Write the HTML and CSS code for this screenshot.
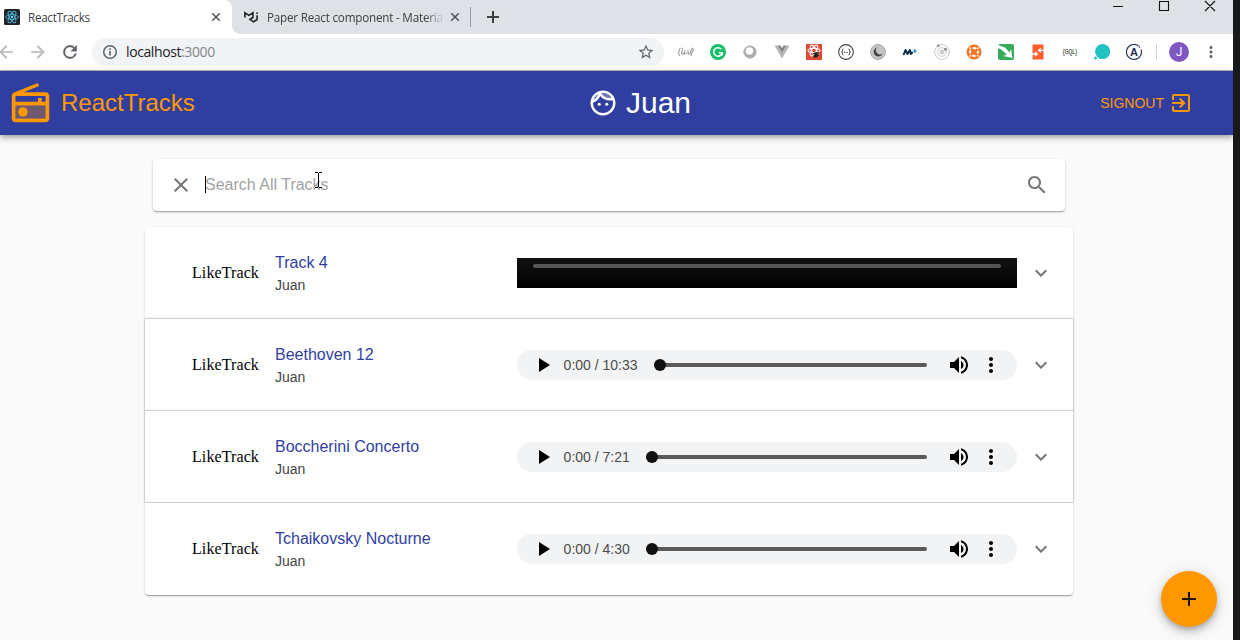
FILE: index.html
```html
<!DOCTYPE html>
<html lang="en">
<head>
<meta charset="utf-8">
<title>ReactTracks</title>
<link rel="stylesheet" href="styles.css">
</head>
<body>
<svg class="defs" width="0" height="0">
  <symbol id="x" viewBox="0 0 24 24"><path d="M19 6.41L17.59 5 12 10.59 6.41 5 5 6.41 10.59 12 5 17.59 6.41 19 12 13.41 17.59 19 19 17.59 13.41 12z"/></symbol>
  <symbol id="volume" viewBox="0 0 24 24"><path d="M3 9v6h4l5 5V4L7 9H3zm13.5 3c0-1.77-1.02-3.29-2.5-4.03v8.05c1.48-.73 2.5-2.25 2.5-4.02zM14 3.23v2.06c2.89.86 5 3.54 5 6.71s-2.11 5.85-5 6.71v2.06c4.01-.91 7-4.49 7-8.77s-2.99-7.86-7-8.77z"/></symbol>
  <symbol id="kebab" viewBox="0 0 24 24"><path d="M12 8c1.1 0 2-.9 2-2s-.9-2-2-2-2 .9-2 2 .9 2 2 2zm0 2c-1.1 0-2 .9-2 2s.9 2 2 2 2-.9 2-2-.9-2-2-2zm0 6c-1.1 0-2 .9-2 2s.9 2 2 2 2-.9 2-2-.9-2-2-2z"/></symbol>
  <symbol id="play" viewBox="0 0 24 24"><path d="M8 5v14l11-7z"/></symbol>
  <symbol id="chevron" viewBox="0 0 24 24"><path d="M16.59 8.59L12 13.17 7.41 8.59 6 10l6 6 6-6z"/></symbol>
</svg>
<div class="window">
  <div class="tabstrip">
    <div class="tab tab-active">
      <svg class="favicon" viewBox="0 0 16 16"><rect width="16" height="16" rx="1.5" fill="#20232a"/><g fill="none" stroke="#4fb8d3" stroke-width=".9"><ellipse cx="8" cy="8" rx="6.4" ry="2.5"/><ellipse cx="8" cy="8" rx="6.4" ry="2.5" transform="rotate(60 8 8)"/><ellipse cx="8" cy="8" rx="6.4" ry="2.5" transform="rotate(120 8 8)"/></g><circle cx="8" cy="8" r="1.3" fill="#61dafb"/></svg>
      <span class="tab-title title-one">ReactTracks</span>
      <svg class="tab-close"><use href="#x"/></svg>
    </div>
    <div class="tab tab-idle">
      <svg class="favicon" viewBox="0 0 16 16" fill="none" stroke="#202124" stroke-width="1.6"><path d="M.9 8.600V3.800l4 2.600 4-2.600v4.700L6 10.300l3.500 2.500 3.600-2.300V6.300M13.100 5V3.400"/></svg>
      <span class="tab-title title-two">Paper React component - Materia</span>
      <svg class="tab-close"><use href="#x"/></svg>
    </div>
    <svg class="newtab" viewBox="0 0 14 14"><path d="M7 1v12M1 7h12" stroke="#3c4043" stroke-width="2"/></svg>
    <svg class="winbtns" viewBox="0 0 110 14" fill="none" stroke="#111"><path d="M3 6.500h10M49.500 1.500h9v9h-9zM95 1l10 10M105 1L95 11" stroke-width="1.100"/></svg>
  </div>
  <div class="toolbar">
    <div class="nav">
      <svg viewBox="0 0 24 24" fill="#babcbe" stroke="#babcbe" stroke-width=".4"><path d="M20 11H7.830l5.590-5.590L12 4l-8 8 8 8 1.410-1.410L7.830 13H20z"/></svg>
      <svg viewBox="0 0 24 24" fill="#babcbe" stroke="#babcbe" stroke-width=".4"><path d="M12 4l-1.410 1.410L16.170 11H4v2h12.170l-5.580 5.590L12 20l8-8z"/></svg>
      <svg viewBox="0 0 24 24" fill="#5f6368" stroke="#5f6368" stroke-width=".5"><path d="M17.650 6.350A7.960 7.960 0 0 0 12 4a8 8 0 1 0 7.730 10h-2.080A6 6 0 1 1 12 6c1.660 0 3.140.69 4.220 1.780L13 11h7V4z"/></svg>
    </div>
    <div class="omnibox">
      <svg class="info" viewBox="0 0 16 16"><circle cx="8" cy="8" r="6.300" fill="none" stroke="#5f6368" stroke-width="1.500"/><path d="M7.200 7h1.600v4.500H7.200zM7.200 4.300h1.600v1.600H7.200z" fill="#5f6368"/></svg>
      <span class="url">localhost<span class="port">:3000</span></span>
      <svg class="star" viewBox="0 0 24 24"><path d="M22 9.240l-7.190-.62L12 2 9.190 8.630 2 9.240l5.460 4.730L5.820 21 12 17.270 18.180 21l-1.630-7.030L22 9.240zM12 15.400l-3.760 2.270 1-4.280-3.320-2.880 4.380-.38L12 6.100l1.710 4.040 4.380.38-3.320 2.880 1 4.280L12 15.400z"/></svg>
    </div>
    <div class="extensions">
      <svg viewBox="0 0 16 16" fill="none" stroke="#999" stroke-width="1.100"><path d="M2.500 4Q-.5 8 1.500 12M13.500 4Q16.500 5 14.500 8T13.500 12M4.500 5.500l-1 4q1 1.500 2.500 0L7 6.500M8 9.500h1M10 6v3.500q1 1 2.500-.5L13.500 5M6.800 6.500v4M4.500 5v-1.200"/></svg>
      <svg viewBox="0 0 16 16"><circle cx="8" cy="8" r="8" fill="#15c26b"/><path d="M11.300 5.200A4.300 4.300 0 1 0 12.200 8.800H8.800M12.200 8.500v3" fill="none" stroke="#fff" stroke-width="1.500"/></svg>
      <svg viewBox="0 0 16 16"><circle cx="8" cy="8" r="6.500" fill="#aaa"/><circle cx="7.500" cy="7" r="3.800" fill="#fff"/><circle cx="8" cy="8" r="6" fill="none" stroke="#bbb" stroke-width="1"/></svg>
      <svg viewBox="0 0 16 16"><path d="M.5 1.500h3.200L8 9l4.300-7.500h3.200L8 14.500z" fill="#b4b4b4"/><path d="M3.700 1.500h2.700L8 4.300l1.600-2.800h2.700L8 9z" fill="#858585"/></svg>
      <svg viewBox="0 0 16 16"><rect width="16" height="16" fill="#dc4a38"/><g fill="none" stroke="#fff" stroke-width="1.100"><ellipse cx="8" cy="6.500" rx="6" ry="2.300"/><ellipse cx="8" cy="6.500" rx="6" ry="2.300" transform="rotate(60 8 6.500)"/><ellipse cx="8" cy="6.500" rx="6" ry="2.300" transform="rotate(120 8 6.500)"/></g><path d="M7 9.500l6-1M7 12l6-.5M8 14l4.500-5" stroke="#222"/><ellipse cx="10" cy="11" rx="2" ry="2.700" fill="#222"/></svg>
      <svg viewBox="0 0 16 16" fill="none" stroke="#444"><circle cx="8" cy="8" r="7.400" stroke-width="1.100"/><path d="M5.500 5q-1.200 0-1 1.500T3.500 8Q4.700 8 4.500 9.500t1 1.500M10.500 5q1.200 0 1 1.500t1 1.500q-1.200 0-1 1.500t-1 1.500M6.200 8.500h.9M7.700 8.500h.8M9.100 8.500h.8"/></svg>
      <svg viewBox="0 0 16 16"><circle cx="8" cy="8" r="7.500" fill="#c4c4c4" stroke="#aaa"/><path d="M7.300 3.300a4.600 4.600 0 1 0 5.400 5.900A3.800 3.800 0 0 1 7.300 3.300z" fill="#444"/></svg>
      <svg viewBox="0 0 16 16" fill="none" stroke="#0b2a4a" stroke-width="1.900"><path d="M1.500 11l2-5L5.500 10l2.500-4 .8 4q1.200-.2 1.700-2" stroke-linejoin="round"/><path d="M12.800 5v4M10.800 7h4" stroke="#1686cc" stroke-width="1.200"/></svg>
      <svg viewBox="0 0 16 16" fill="none" stroke="#ccc"><circle cx="8" cy="8" r="7.400"/><circle cx="8" cy="8" r="4.300"/><circle cx="8" cy="8" r="2" fill="#ccc"/><circle cx="4.300" cy="1.800" r="1.500" fill="#999" stroke="none"/><circle cx="11.500" cy="5.200" r="1.500" fill="#888" stroke="none"/></svg>
      <svg viewBox="0 0 16 16"><circle cx="8" cy="8" r="7.500" fill="#f37626"/><g stroke="#fff" fill="none"><circle cx="8" cy="8" r="3.900" stroke-width="2" stroke-dasharray="3.600 2.520" stroke-dashoffset="1.800"/><path d="M5 5L3.300 3.300M11 5l1.700-1.700M5 11l-1.700 1.700M11 11l1.700 1.700" stroke-width="1.200"/></g></svg>
      <svg viewBox="0 0 16 16"><rect width="16" height="16" rx="2" fill="#36aa58"/><path d="M0 1l7 2.500 4.500 5L13 5l1.500 9-9.500-2 3.800-1.200L4 6 0 4z" fill="#fff"/></svg>
      <svg viewBox="0 0 16 16"><path d="M2.500.5h11v15h-11z" fill="#ff5c2b"/><path d="M2 10h5M5 7.800L7.300 10 5 12.200M14 6.300H9M11 4.100L8.700 6.300 11 8.500" fill="none" stroke="#fff" stroke-width="1.300"/></svg>
      <svg viewBox="0 0 16 16"><text x="8" y="10.200" text-anchor="middle" textLength="14.500" lengthAdjust="spacingAndGlyphs" class="gql">{GQL}</text></svg>
      <svg viewBox="0 0 16 16" fill="#20c2c2"><circle cx="8.600" cy="7.600" r="7.500"/><circle cx="1.500" cy="14" r="1.500"/></svg>
      <svg viewBox="0 0 16 16" fill="none" stroke="#1f2f56"><path d="M12.500 2a7.500 7.500 0 1 0 2.500 3.400" stroke-width="1.100"/><circle cx="13.500" cy="3" r=".8" fill="#1f2f56" stroke="none"/><text x="8" y="12" text-anchor="middle" class="letter-a">A</text></svg>
    </div>
    <span class="rule"></span>
    <span class="avatar">J</span>
    <svg class="menu"><use href="#kebab"/></svg>
  </div>
  <header class="appbar">
    <div class="brand">
      <svg class="radio" viewBox="0 0 24 24"><path d="M4 20h16v-7H4z" opacity=".3"/><path d="M2 20c0 1.100.89 2 2 2h16c1.110 0 2-.9 2-2V8c0-1.110-.89-2-2-2H8.300l8.260-3.340L15.880 1 3.240 6.150C2.510 6.430 2 7.170 2 8v12zm2 0v-7h16v7H4zM4 8h16v3h-2V9h-2v2H4V8z"/><circle cx="8" cy="16.480" r="2.500"/></svg>
      <span class="brand-name">ReactTracks</span>
    </div>
    <div class="user">
      <svg class="face" viewBox="0 0 24 24"><path d="M17.500 8c.46 0 .91-.05 1.340-.12C17.440 5.560 14.900 4 12 4c-.46 0-.91.050-1.340.12C12.060 6.440 14.600 8 17.500 8zM8.080 5.030C6.370 6 5.050 7.580 4.420 9.470c1.710-.97 3.030-2.550 3.660-4.440z" opacity=".3"/><path fill-rule="evenodd" d="M12 2C6.480 2 2 6.480 2 12s4.480 10 10 10 10-4.480 10-10S17.520 2 12 2zM10.660 4.120C11.090 4.050 11.540 4 12 4c2.900 0 5.440 1.560 6.840 3.880-.43.070-.88.120-1.340.12-2.900 0-5.440-1.560-6.840-3.880zM8.080 5.030C7.450 6.920 6.130 8.500 4.420 9.470 5.050 7.580 6.370 6 8.080 5.030zM12 20c-4.420 0-8-3.580-8-8 0-.05.010-.1 0-.14 2.600-.98 4.690-2.990 5.740-5.550C11.580 8.560 14.370 10 17.500 10c.75 0 1.470-.09 2.170-.24.210.71.330 1.460.33 2.240 0 4.420-3.580 8-8 8z"/><circle cx="9" cy="13" r="1.250"/><circle cx="15" cy="13" r="1.250"/></svg>
      <span>Juan</span>
    </div>
    <div class="signout">
      <span>SIGNOUT</span>
      <svg viewBox="0 0 24 24"><path d="M10.090 15.590L11.500 17l5-5-5-5-1.410 1.410L12.670 11H3v2h9.670l-2.580 2.590zM19 3H5c-1.110 0-2 .9-2 2v4h2V5h14v14H5v-4H3v4c0 1.100.89 2 2 2h14c1.100 0 2-.9 2-2V5c0-1.100-.9-2-2-2z"/></svg>
    </div>
  </header>
  <main class="content">
    <div class="search">
      <svg><use href="#x"/></svg>
      <span class="placeholder">Search All Tracks
        <svg class="ibeam" viewBox="0 0 7 16"><path d="M0 .5h3M4 .5h3M3.500 1v14M0 15.500h3M4 15.500h3" stroke="#000"/></svg>
      </span>
      <svg viewBox="0 0 24 24"><path d="M15.500 14h-.79l-.28-.27C15.410 12.590 16 11.110 16 9.500 16 5.910 13.090 3 9.500 3S3 5.910 3 9.500 5.910 16 9.500 16c1.610 0 3.090-.59 4.230-1.570l.27.28v.79l5 4.990L20.490 19l-4.990-5zm-6 0C7.010 14 5 11.990 5 9.500S7.010 5 9.500 5 14 7.010 14 9.500 11.990 14 9.500 14z"/></svg>
    </div>
    <ul class="tracks">
      <li class="track">
        <span class="like">LikeTrack</span>
        <div class="meta"><span class="name">Track 4</span><span class="author">Juan</span></div>
        <div class="player player-loading"><span class="bar"></span></div>
        <svg class="expand"><use href="#chevron"/></svg>
      </li>
      <li class="track track-middle">
        <span class="like">LikeTrack</span>
        <div class="meta"><span class="name">Beethoven 12</span><span class="author">Juan</span></div>
        <div class="player"><svg><use href="#play"/></svg><span class="time">0:00 / 10:33</span><span class="seek"></span><svg><use href="#volume"/></svg><svg class="more"><use href="#kebab"/></svg></div>
        <svg class="expand"><use href="#chevron"/></svg>
      </li>
      <li class="track track-middle">
        <span class="like">LikeTrack</span>
        <div class="meta"><span class="name">Boccherini Concerto</span><span class="author">Juan</span></div>
        <div class="player"><svg><use href="#play"/></svg><span class="time">0:00 / 7:21</span><span class="seek"></span><svg><use href="#volume"/></svg><svg class="more"><use href="#kebab"/></svg></div>
        <svg class="expand"><use href="#chevron"/></svg>
      </li>
      <li class="track">
        <span class="like">LikeTrack</span>
        <div class="meta"><span class="name">Tchaikovsky Nocturne</span><span class="author">Juan</span></div>
        <div class="player"><svg><use href="#play"/></svg><span class="time">0:00 / 4:30</span><span class="seek"></span><svg><use href="#volume"/></svg><svg class="more"><use href="#kebab"/></svg></div>
        <svg class="expand"><use href="#chevron"/></svg>
      </li>
    </ul>
  </main>
  <div class="fab"><svg viewBox="0 0 24 24"><path d="M19 13h-6v6h-2v-6H5v-2h6V5h2v6h6z"/></svg></div>
</div>
</body>
</html>
```
FILE: styles.css
```css
* { box-sizing: border-box; }
body { margin: 0; width: 1240px; height: 640px; overflow: hidden; background: #18191a; font-family: "Liberation Sans", Arial, sans-serif; }
svg { display: block; flex: none; width: 24px; height: 24px; }
svg.defs { position: absolute; width: 0; height: 0; }
.window { position: relative; display: flex; flex-direction: column; width: 1233px; height: 640px; background: #fafafa; overflow: hidden; }

/* Browser chrome */
.tabstrip { display: flex; align-items: center; height: 34px; flex: none; background: #dee1e6; }
.tab { display: flex; align-items: center; height: 34px; }
.tab-active { width: 232px; padding-left: 4px; background: #fff; border-radius: 0 8px 0 0; }
.tab-idle { width: 239px; padding-left: 12px; position: relative; }
.tab-idle::before { content: ""; position: absolute; left: 0; bottom: 0; width: 8px; height: 8px; background: radial-gradient(circle at 8px 0, transparent 7.500px, #fff 8px); }
.tab-idle::after { content: ""; position: absolute; right: 0; top: 7px; width: 1px; height: 20px; background: #989ba0; }
svg.favicon { width: 16px; height: 16px; }
.tab-title { font-family: "Open Sans", "Noto Sans", sans-serif; font-size: 12px; line-height: 16px; color: #3c4043; white-space: nowrap; }
.title-one { margin-left: 8px; width: 181px; letter-spacing: -0.55px; font-size: 12.200px; }
.title-one { letter-spacing: -0.3px; font-size: 11.700px; }
.title-two { margin-left: 7px; width: 176px; font-size: 11.700px; letter-spacing: -0.22px; -webkit-mask-image: linear-gradient(90deg, #000 158px, transparent 178px); mask-image: linear-gradient(90deg, #000 158px, transparent 178px); }
svg.tab-close { width: 14px; height: 14px; fill: #4d5156; stroke: #4d5156; stroke-width: .7; }
.tab-idle .tab-close { margin-left: 5px; }
svg.newtab { width: 14px; height: 14px; margin-left: 15px; }
svg.winbtns { width: 110px; height: 14px; margin: -20px 13px 0 auto; }
.toolbar { display: flex; align-items: center; height: 37px; flex: none; background: #fff; border-bottom: 1px solid #b4b5b8; }
.nav { display: flex; gap: 12px; margin-left: -4px; width: 96px; flex: none; }
.nav svg { width: 20px; height: 20px; }
.omnibox { display: flex; align-items: center; width: 572px; height: 28px; padding: 0 9px 0 10px; border-radius: 14px; background: #f1f3f4; flex: none; }
svg.info { width: 16px; height: 16px; }
.url { flex: 1; margin-left: 8px; font: 14px/20px "Open Sans", "Noto Sans", sans-serif; letter-spacing: -0.4px; color: #202124; }
.port { color: #80868b; }
svg.star { width: 18px; height: 18px; fill: #5f6368; }
.extensions { display: flex; gap: 16px; margin-left: 14px; }
.extensions svg { width: 16px; height: 16px; }
.gql { font: bold 7px "Liberation Sans", sans-serif; fill: #555; }
.letter-a { font: bold 11px "Liberation Sans", sans-serif; fill: #1f2f56; stroke: none; }
.rule { width: 1px; height: 16px; margin-left: 14px; background: #d0d2d5; }
.avatar { width: 20px; height: 20px; margin-left: 12px; border-radius: 50%; background: #7e57c2; color: #fff; font: 12px/20px Roboto, sans-serif; text-align: center; }
svg.menu { width: 18px; height: 18px; margin-left: 13px; fill: #5f6368; }

/* App bar */
.appbar { position: relative; display: flex; align-items: center; height: 64px; flex: none; background: #303f9f; color: #ff9800; box-shadow: 0 2px 4px -1px rgba(0,0,0,.2), 0 4px 5px rgba(0,0,0,.14), 0 1px 10px rgba(0,0,0,.12); }
.brand { display: flex; align-items: center; width: 588px; padding-left: 8px; }
svg.radio { width: 45px; height: 45px; fill: #ff9800; }
.brand-name { margin-left: 8px; font-size: 24px; line-height: 32px; }
.user { display: flex; align-items: center; gap: 8px; flex: 1; color: #fff; font-size: 30px; line-height: 36px; }
svg.face { width: 30px; height: 30px; fill: #fff; }
.signout { display: flex; align-items: center; gap: 5px; margin-right: 40px; font-size: 14px; line-height: 24px; }
.signout svg { fill: #ff9800; }

/* Page content */
.content { width: 928px; margin: 24px 0 0 145px; }
.search { display: flex; align-items: center; width: 912px; height: 52px; margin-left: 8px; padding: 0 16px; border-radius: 4px; background: #fff; box-shadow: 0 1px 3px rgba(0,0,0,.2), 0 1px 1px rgba(0,0,0,.14), 0 2px 1px -1px rgba(0,0,0,.12); }
.search > svg { fill: #757575; }
.placeholder { position: relative; flex: 1; margin: 0 0 2px 12px; font-size: 16px; line-height: 19px; color: #a2a2a2; }
.placeholder::before { content: ""; position: absolute; left: 0; top: 1px; width: 1px; height: 17px; background: #000; }
svg.ibeam { position: absolute; left: 110px; top: -3px; width: 7px; height: 16px; }
.tracks { margin: 16px 0 0; padding: 0; list-style: none; }
.track { display: flex; align-items: center; height: 92px; padding-left: 47px; background: #fff; box-shadow: 0 2px 1px -1px rgba(0,0,0,.2), 0 1px 1px rgba(0,0,0,.14), 0 1px 3px rgba(0,0,0,.12); }
.track + .track { position: relative; }
.track + .track::before { content: ""; position: absolute; left: 0; right: 0; top: -1px; height: 1px; background: #d0d0d0; }
.track-middle { box-shadow: 0 0 2px rgba(0,0,0,.5); }
.track:first-child { border-radius: 4px 4px 0 0; }
.track:last-child { border-radius: 0 0 4px 4px; }
.like { width: 83px; font: 16px/18px "Liberation Serif", serif; letter-spacing: .1px; color: #000; }
.meta { display: flex; flex-direction: column; width: 242px; }
.name { font-size: 16px; line-height: 24px; color: #303f9f; }
.author { font-size: 14px; line-height: 21px; color: #444; }
.player { display: flex; align-items: center; width: 500px; height: 30px; padding-left: 14px; border-radius: 15px; background: #f1f3f4; }
.player svg { fill: #000; }
.time { margin: 0 16px 0 8.600px; font-size: 14px; line-height: 16px; color: #4c4c4c; white-space: nowrap; }
.seek { position: relative; flex: 1; height: 4px; margin-right: 20px; border-radius: 2px; background: #5a5a5a; }
.seek::before { content: ""; position: absolute; left: 0; top: -4px; width: 12px; height: 12px; border-radius: 50%; background: #111; }
svg.more { margin: 0 14px 0 8px; }
.player-loading { align-items: flex-start; padding: 6px 16px 0; border-radius: 0; background: linear-gradient(#121212, #000); }
.bar { flex: 1; height: 4px; border-radius: 2px; background: #555; }
svg.expand { margin-left: 12px; fill: #757575; }
.fab { position: absolute; left: 1161px; top: 571px; display: grid; place-items: center; width: 56px; height: 56px; border-radius: 50%; background: #ff9800; box-shadow: 0 3px 5px -1px rgba(0,0,0,.2), 0 6px 10px rgba(0,0,0,.14), 0 1px 18px rgba(0,0,0,.12); }
.fab svg { fill: #211500; }
```
